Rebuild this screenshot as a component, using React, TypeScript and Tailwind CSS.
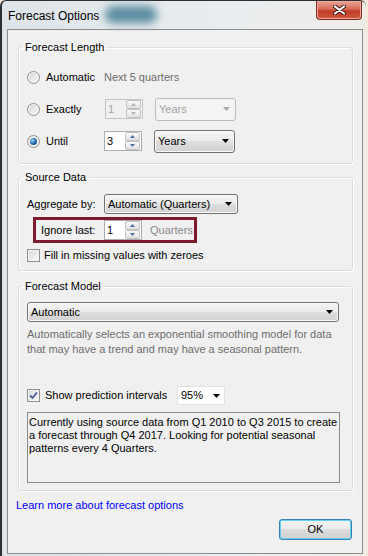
import clsx from 'clsx'

function Radio({ checked }: { checked?: boolean }) {
    return (
        <span className="w-[13px] h-[13px] shrink-0 rounded-full border border-[#8e8f8f] bg-[linear-gradient(135deg,#d4d4d4,#fafafa)] shadow-[inset_0_0_0_1px_#f6f6f6] flex items-center justify-center">
            {checked && (
                <span className="w-[7px] h-[7px] rounded-full bg-[radial-gradient(circle_at_35%_35%,#9ad8ff,#1f63a6_55%,#0b3b6e)]" />
            )}
        </span>
    )
}

function Checkbox({ checked }: { checked?: boolean }) {
    return (
        <span className="w-[13px] h-[13px] shrink-0 border border-[#8e8f8f] bg-[linear-gradient(135deg,#d8d8d8,#fbfbfb)] shadow-[inset_0_0_0_1px_#f4f4f4] flex items-center justify-center">
            {checked && (
                <svg width="9" height="9" viewBox="0 0 9 9">
                    <path d="M1 4.5 L3.5 7 L8 1.5" stroke="#4a5f97" strokeWidth="1.8" fill="none" />
                </svg>
            )}
        </span>
    )
}

function SpinBtn({ up, disabled }: { up?: boolean; disabled?: boolean }) {
    return (
        <div className="h-[9px] w-[15px] border border-[#c2c2c2] rounded-[2px] bg-gradient-to-b from-[#f9f9f9] to-[#e2e2e2] flex items-center justify-center">
            <svg width="5" height="3" viewBox="0 0 5 3">
                <polygon points={up ? '2.5,0 5,3 0,3' : '0,0 5,0 2.5,3'} fill={disabled ? '#b4b4b4' : '#4d6eab'} />
            </svg>
        </div>
    )
}

function Spinner({ value, disabled }: { value: string; disabled?: boolean }) {
    return (
        <div
            className={clsx(
                'w-[38px] h-[20px] border flex shrink-0',
                disabled ? 'border-[#c6c6c6] bg-[#f0f0f0] text-[#a3a3a3]' : 'border-[#abadb3] bg-white text-black',
            )}
        >
            <span className="flex-1 pl-[2px] leading-[18px]">{value}</span>
            <div className="flex flex-col pr-[1px]">
                <SpinBtn up disabled={disabled} />
                <SpinBtn disabled={disabled} />
            </div>
        </div>
    )
}

function Arrow({ color = '#000' }: { color?: string }) {
    return (
        <svg width="7" height="4" viewBox="0 0 7 4" className="shrink-0">
            <polygon points="0,0 7,0 3.5,4" fill={color} />
        </svg>
    )
}

function Combo({ label, className, disabled }: { label: string; className: string; disabled?: boolean }) {
    return (
        <div
            className={clsx(
                'flex items-center justify-between pl-[3px] pr-[5px] rounded-[3px] border shrink-0',
                disabled
                    ? 'border-[#b9bdc1] bg-[#f4f4f4] text-[#a3a3a3]'
                    : 'border-[#707070] bg-[linear-gradient(#f4f4f4,#ebebeb_50%,#dedede_50%,#d2d2d2)] shadow-[inset_0_0_0_1px_#fbfbfb] text-black',
                className,
            )}
        >
            <span>{label}</span>
            <Arrow color={disabled ? '#a8a8a8' : '#000'} />
        </div>
    )
}

function Group({ title, className, children }: { title: string; className?: string; children: React.ReactNode }) {
    return (
        <fieldset
            className={clsx(
                'ml-[10px] w-[335px] border border-[#d5dfe5] rounded-[3px] shadow-[inset_1px_1px_0_#fff,1px_1px_0_#fff] p-0',
                className,
            )}
        >
            <legend className="ml-[3px] px-[3px] leading-[16px]">{title}</legend>
            {children}
        </fieldset>
    )
}

export default function App() {
    return (
        <div className="w-[368px] h-[556px] bg-[#f6e9dc] overflow-hidden font-['Liberation_Sans',Arial,sans-serif] text-[11px] text-black">
            <div className="w-[366px] h-[556px] border-l-2 border-t border-[#2c3033] rounded-tl-[6px] rounded-tr-[6px] bg-[linear-gradient(90deg,#dde3e7,#e9edf0_60%,#efece8)] flex flex-col">
                {/* title bar */}
                <div className="h-[28px] flex items-start shrink-0">
                    <span className="ml-[6px] mt-[8px] text-[12px] leading-[14px] text-black">Forecast Options</span>
                    <span className="ml-[6px] mt-[5px] w-[52px] h-[17px] rounded-full bg-[#5b8ca1] blur-[4px]" />
                    <div className="ml-auto mr-[4px] w-[46px] h-[19px] rounded-b-[4px] border border-t-0 border-[#7c2b22] bg-[linear-gradient(#e8a597,#d86b57_45%,#c13b26_55%,#cf5a3f)] shadow-[inset_0_0_0_1px_#f0a898] flex items-center justify-center">
                        <svg width="13" height="10" viewBox="0 0 13 10">
                            <path d="M2 1.5 L11 8.5 M11 1.5 L2 8.5" stroke="#3b1a14" strokeWidth="4" strokeLinecap="round" />
                            <path d="M2 1.5 L11 8.5 M11 1.5 L2 8.5" stroke="#fff" strokeWidth="2.2" strokeLinecap="round" />
                        </svg>
                    </div>
                </div>

                {/* client area */}
                <div className="ml-[5px] w-[356px] h-[525px] border border-[#8b8b8b] bg-[#f0f0f0] flex flex-col">
                    <Group title="Forecast Length" className="mt-[9px] pb-[11px]">
                        <div className="pt-[11px] pl-[8px] flex flex-col gap-[10px]">
                            <div className="h-[22px] flex items-center">
                                <div className="w-[77px] flex items-center gap-[6px]">
                                    <Radio />
                                    <span>Automatic</span>
                                </div>
                                <span className="text-[#6d6d6d]">Next 5 quarters</span>
                            </div>
                            <div className="h-[22px] flex items-center">
                                <div className="w-[78px] flex items-center gap-[6px]">
                                    <Radio />
                                    <span>Exactly</span>
                                </div>
                                <Spinner value="1" disabled />
                                <Combo label="Years" disabled className="ml-[12px] w-[81px] h-[23px]" />
                            </div>
                            <div className="h-[22px] flex items-center">
                                <div className="w-[77px] flex items-center gap-[6px]">
                                    <Radio checked />
                                    <span>Until</span>
                                </div>
                                <Spinner value="3" />
                                <Combo label="Years" className="ml-[12px] w-[81px] h-[23px]" />
                            </div>
                        </div>
                    </Group>

                    <Group title="Source Data" className="mt-[5px] pb-[8px]">
                        <div className="pt-[9px] pl-[8px] flex flex-col">
                            <div className="h-[20px] flex items-center">
                                <span className="w-[77px]">Aggregate by:</span>
                                <Combo label="Automatic (Quarters)" className="w-[134px] h-[20px]" />
                            </div>
                            <div className="mt-[3px] ml-[6px] w-[164px] h-[26px] border-[3px] border-[#7d1b2c] flex items-center pl-[5px]">
                                <span className="w-[63px]">Ignore last:</span>
                                <Spinner value="1" />
                                <span className="ml-[8px] text-[#8a8a8a]">Quarters</span>
                            </div>
                            <div className="mt-[5px] h-[14px] flex items-center gap-[4px]">
                                <Checkbox />
                                <span>Fill in missing values with zeroes</span>
                            </div>
                        </div>
                    </Group>

                    <Group title="Forecast Model" className="mt-[7px] pb-[7px]">
                        <div className="pt-[8px] pl-[8px] flex flex-col">
                            <Combo label="Automatic" className="w-[312px] h-[20px]" />
                            <p className="mt-[5px] leading-[15px] text-[#6d6d6d]">
                                Automatically selects an exponential smoothing model for data
                                <br />
                                that may have a trend and may have a seasonal pattern.
                            </p>
                            <div className="mt-[29px] h-[19px] flex items-center">
                                <Checkbox checked />
                                <span className="ml-[5px] w-[132px]">Show prediction intervals</span>
                                <div className="w-[48px] h-[19px] border border-[#e2e2e2] bg-white flex items-center justify-between pl-[3px] pr-[4px]">
                                    <span>95%</span>
                                    <Arrow />
                                </div>
                            </div>
                            <div className="mt-[7px] w-[313px] h-[71px] border border-[#8a8a8a] bg-[#f0f0f0] pl-[1px] pt-[3px] leading-[13px]">
                                Currently using source data from Q1 2010 to Q3 2015 to create
                                <br />
                                a forecast through Q4 2017. Looking for potential seasonal
                                <br />
                                patterns every 4 Quarters.
                            </div>
                        </div>
                    </Group>

                    <a className="mt-[7px] ml-[8px] leading-[15px] text-[#0000ff] cursor-pointer">
                        Learn more about forecast options
                    </a>

                    <button className="mt-[6px] ml-[271px] w-[73px] h-[21px] rounded-[3px] border border-[#3c7fb1] bg-[linear-gradient(#f2f2f2,#ebebeb_50%,#dddddd_50%,#cfcfcf)] shadow-[inset_0_0_0_1px_#5fd1f5] leading-[19px] text-black">
                        OK
                    </button>
                </div>
            </div>
        </div>
    )
}
